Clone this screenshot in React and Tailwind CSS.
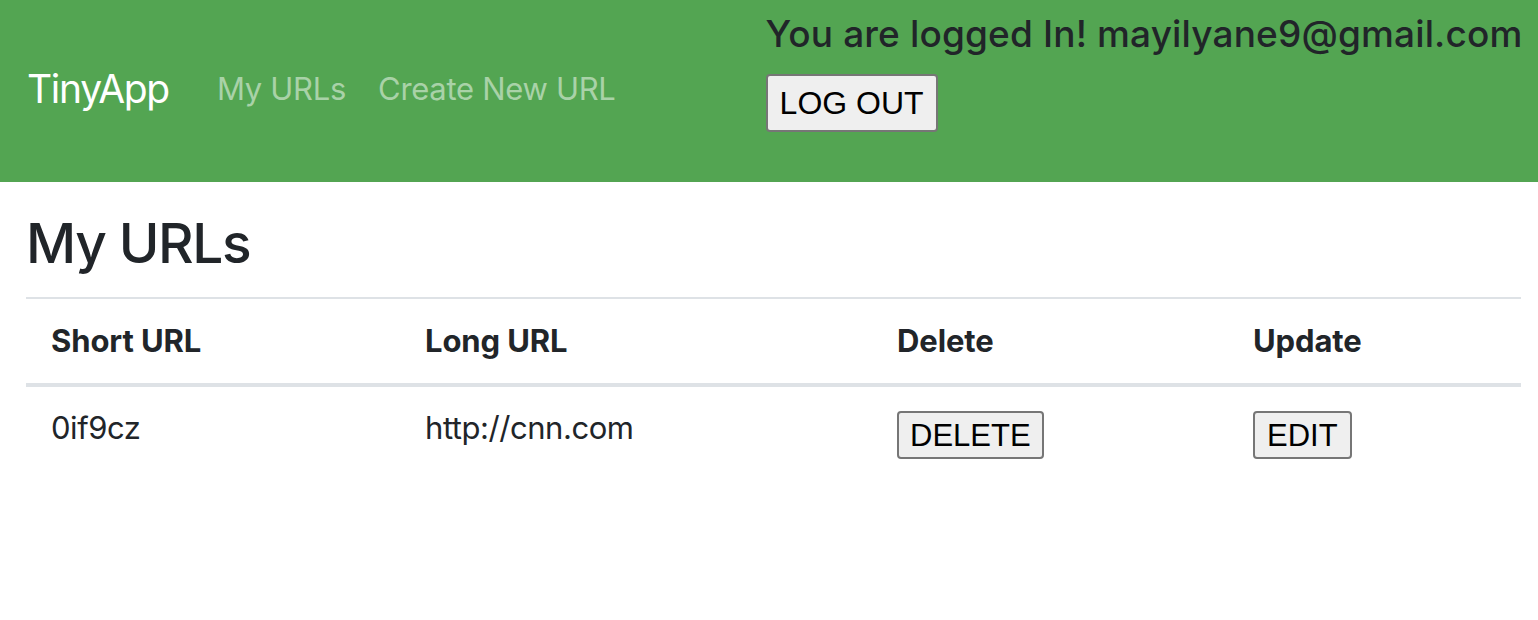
export default function App() {
  return (
    <div className="min-h-screen bg-white font-['Inter',sans-serif] text-[#212529]">
      <nav className="h-[182px] bg-[#53a552] flex items-start px-[27px] whitespace-nowrap">
        <div className="flex items-center h-full pb-[4px] shrink-0">
          <a className="text-[39px] text-white tracking-[-1.3px]">TinyApp</a>
          <ul className="flex ml-[48px] gap-[32px] text-[31px] text-[#a9d2a8] tracking-[-0.3px]">
            <li>My URLs</li>
            <li>Create New URL</li>
          </ul>
        </div>
        <div className="ml-[150px] pt-[12px] shrink-0">
          <h4 className="text-[37px] leading-[1.2] font-medium tracking-[0.15px]">You are logged In! mayilyane9@gmail.com</h4>
          <button className="mt-[18px] h-[58px] px-[12px] bg-[#efefef] border-2 border-[#767676] rounded-[4px] text-black text-[32px] font-['Liberation_Sans',sans-serif] leading-none">
            LOG OUT
          </button>
        </div>
      </nav>
      <main className="pl-[26px] pr-[17px] pt-[28px]">
        <h2 className="text-[55px] font-medium leading-[1.2] pb-[21px] border-b-2 border-[#dee2e6] tracking-[-1.4px]">My URLs</h2>
        <table className="w-full text-[31px] border-collapse tracking-[-0.45px]">
          <thead>
            <tr className="border-b-4 border-[#dee2e6]">
              <th className="text-left font-bold pl-[25px] h-[86px] w-[374px] tracking-[-0.1px]">Short URL</th>
              <th className="text-left font-bold pl-[25px] w-[472px] tracking-[-0.1px]">Long URL</th>
              <th className="text-left font-bold pl-[25px] w-[356px] tracking-[-0.1px]">Delete</th>
              <th className="text-left font-bold pl-[25px] tracking-[-0.1px]">Update</th>
            </tr>
          </thead>
          <tbody>
            <tr>
              <td className="pl-[25px] pt-[18px] align-top">0if9cz</td>
              <td className="pl-[25px] pt-[18px] align-top">http://cnn.com</td>
              <td className="pl-[25px] pt-[24px] align-top">
                <button className="h-[48px] px-[11px] bg-[#efefef] border-2 border-[#767676] rounded-[4px] text-black text-[31px] font-['Liberation_Sans',sans-serif] leading-none tracking-normal">DELETE</button>
              </td>
              <td className="pl-[25px] pt-[24px] align-top">
                <button className="h-[48px] px-[12px] bg-[#efefef] border-2 border-[#767676] rounded-[4px] text-black text-[31px] font-['Liberation_Sans',sans-serif] leading-none tracking-normal">EDIT</button>
              </td>
            </tr>
          </tbody>
        </table>
      </main>
    </div>
  );
}
